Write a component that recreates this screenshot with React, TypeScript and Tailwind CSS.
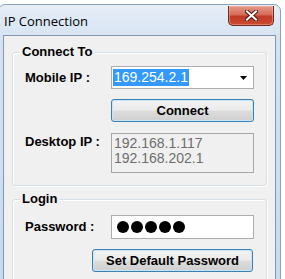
import React from 'react'

function CloseGlyph() {
    return (
        <svg width="13" height="11" viewBox="0 0 13 11">
            <path d="M2 1.5 L11 9.5 M11 1.5 L2 9.5" stroke="#4a1a14" strokeWidth="4" strokeLinecap="square" />
            <path d="M2 1.5 L11 9.5 M11 1.5 L2 9.5" stroke="#ffffff" strokeWidth="2" strokeLinecap="square" />
        </svg>
    )
}

function WinButton({ label, width }: { label: string; width: string }) {
    return (
        <button
            className={`${width} h-[23px] rounded-[3px] border border-[#3c7fb1] bg-[linear-gradient(to_bottom,#f2f2f2_0%,#ebebeb_48%,#dddddd_52%,#cfcfcf_100%)] shadow-[inset_0_0_0_1px_#c6e6f8] text-[13px] font-bold text-black leading-[21px]`}
        >
            {label}
        </button>
    )
}

function GroupBox({ title, className, children }: { title: string; className: string; children: React.ReactNode }) {
    return (
        <div
            className={`relative mx-[8px] rounded-[3px] border border-[#d5dfe5] shadow-[inset_1px_1px_0_#ffffff,1px_1px_0_#ffffff] ${className}`}
        >
            <span className="absolute -top-[9px] left-[7px] bg-[#f0f0f0] px-[2px] text-[13px] font-bold leading-[16px] text-black">
                {title}
            </span>
            {children}
        </div>
    )
}

export default function App() {
    return (
        <div className="h-[279px] w-[285px] overflow-hidden bg-white font-['Liberation_Sans',Arial,sans-serif]">
            <div className="ml-[-2px] mt-[4px] flex h-[300px] w-[283px] flex-col rounded-t-[7px] border border-[#8aa0bb] bg-[linear-gradient(to_bottom,#e6eef8,#d3e1f1_40px,#c9d9ed)] px-[4px]">
                <div className="flex h-[30px] items-start justify-between">
                    <span className="self-center pl-[1px] pt-[1px] font-['Open_Sans',sans-serif] text-[13px] leading-[30px] text-black">
                        IP Connection
                    </span>
                    <div className="mt-[1px] mr-[2px] flex h-[20px] w-[46px] items-center justify-center rounded-b-[5px] border border-t-0 border-[#6b2a22] bg-[linear-gradient(to_bottom,#e59a88_0%,#d46c58_45%,#c13a26_55%,#cc4c32_100%)] shadow-[inset_0_0_0_1px_rgba(255,200,190,0.4)]">
                        <CloseGlyph />
                    </div>
                </div>
                <div className="flex-1 border border-[#8196b0] bg-[#f0f0f0] pt-[16px]">
                    <GroupBox title="Connect To" className="pl-[12px] pr-[12px] pt-[13px] pb-[12px]">
                        <div className="flex items-center">
                            <span className="w-[86px] text-[13px] font-bold leading-[16px] text-black">Mobile IP&nbsp;:</span>
                            <div className="flex h-[23px] w-[143px] items-center justify-between border border-[#abadb3] bg-white pl-[1px] pr-[6px]">
                                <span className="bg-[#3399ff] px-[1px] text-[14px] leading-[17px] text-white">169.254.2.1</span>
                                <svg width="7" height="4" viewBox="0 0 7 4">
                                    <polygon points="0,0 7,0 3.5,4" fill="#000" />
                                </svg>
                            </div>
                        </div>
                        <div className="mt-[10px] flex">
                            <div className="w-[86px]" />
                            <WinButton label="Connect" width="w-[143px]" />
                        </div>
                        <div className="mt-[11px] flex items-start">
                            <span className="mt-[1px] w-[86px] text-[13px] font-bold leading-[16px] text-black">Desktop IP :</span>
                            <div className="h-[40px] w-[143px] border border-[#a5a7ac] pl-[2px] pt-[2px] text-[14px] leading-[15px] text-[#6d6d6d]">
                                <div>192.168.1.117</div>
                                <div>192.168.202.1</div>
                            </div>
                        </div>
                    </GroupBox>
                    <GroupBox title="Login" className="mt-[13px] pl-[12px] pr-[12px] pt-[15px] pb-[12px]">
                        <div className="flex items-center">
                            <span className="w-[86px] text-[13px] font-bold leading-[16px] text-black">Password :</span>
                            <div className="flex h-[24px] w-[143px] items-center gap-[2px] border border-[#abadb3] bg-white pl-[5px]">
                                {[0, 1, 2, 3, 4].map((i) => (
                                    <div key={i} className="h-[12px] w-[12px] rounded-full bg-black" />
                                ))}
                            </div>
                        </div>
                        <div className="mt-[10px] flex justify-end pr-[1px]">
                            <WinButton label="Set Default Password" width="w-[161px]" />
                        </div>
                    </GroupBox>
                </div>
            </div>
        </div>
    )
}
